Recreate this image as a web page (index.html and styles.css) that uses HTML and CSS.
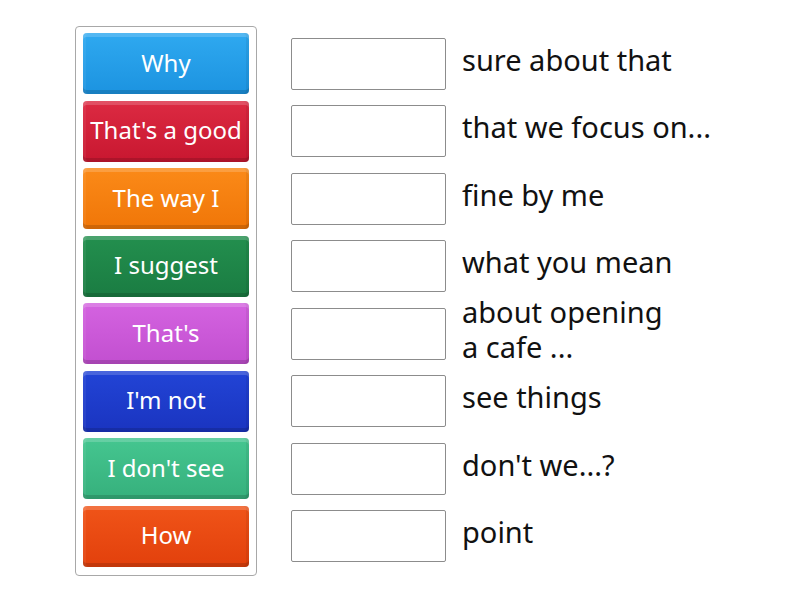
FILE: index.html
```html
<!DOCTYPE html>
<html>
<head>
<meta charset="utf-8">
<link rel="stylesheet" href="styles.css">
</head>
<body>
<div class="page">
  <div class="tiles">
    <div class="tile blue">Why</div>
    <div class="tile red">That's a good</div>
    <div class="tile orange">The way I</div>
    <div class="tile green">I suggest</div>
    <div class="tile purple">That's</div>
    <div class="tile navy">I'm not</div>
    <div class="tile mint">I don't see</div>
    <div class="tile tomato">How</div>
  </div>
  <div class="answers">
    <div class="row"><div class="slot"></div><div class="label">sure about that</div></div>
    <div class="row"><div class="slot"></div><div class="label">that we focus on...</div></div>
    <div class="row"><div class="slot"></div><div class="label">fine by me</div></div>
    <div class="row"><div class="slot"></div><div class="label">what you mean</div></div>
    <div class="row"><div class="slot"></div><div class="label">about opening<br>a cafe ...</div></div>
    <div class="row"><div class="slot"></div><div class="label">see things</div></div>
    <div class="row"><div class="slot"></div><div class="label">don't we...?</div></div>
    <div class="row"><div class="slot"></div><div class="label">point</div></div>
  </div>
</div>
</body>
</html>
```

FILE: styles.css
```css
html, body {
  margin: 0;
  padding: 0;
  background: #ffffff;
}
body {
  font-family: "Noto Sans", "Open Sans", sans-serif;
  width: 800px;
  height: 600px;
  overflow: hidden;
}
.page {
  display: flex;
  align-items: flex-start;
  padding: 26px 0 0 75px;
}
.tiles {
  width: 166px;
  height: 536px;
  padding: 6px 7px;
  border: 1px solid #a8a8a8;
  border-radius: 4px;
  display: flex;
  flex-direction: column;
  gap: 6.5px;
}
.tile {
  height: 61px;
  border-radius: 4px;
  color: #ffffff;
  font-size: 24px;
  display: flex;
  align-items: center;
  justify-content: center;
  white-space: nowrap;
  box-shadow: inset 0 4px 0 rgba(255,255,255,0.18), inset 0 -4px 0 rgba(0,0,0,0.14), inset 3px 0 0 rgba(255,255,255,0.06), inset -3px 0 0 rgba(0,0,0,0.06);
  padding-bottom: 3px;
  box-sizing: border-box;
}
.blue { background: linear-gradient(#2fa9f0, #1c93e0); }
.red { background: linear-gradient(#dc2a42, #c81730); }
.orange { background: linear-gradient(#fb8a18, #f07608); }
.green { background: linear-gradient(#238f4e, #1a7c42); }
.purple { background: linear-gradient(#d463e0, #c24fd0); }
.navy { background: linear-gradient(#2244d6, #1a34c0); }
.mint { background: linear-gradient(#45c690, #36b07c); }
.tomato { background: linear-gradient(#f05418, #e2400c); }
.answers {
  padding-top: 7px;
  margin-left: 34px;
  display: flex;
  flex-direction: column;
  gap: 6.5px;
}
.row {
  height: 61px;
  display: flex;
  align-items: center;
}
.slot {
  width: 153px;
  height: 50px;
  border: 1px solid #8c8c8c;
  border-radius: 2px;
  flex: none;
}
.label {
  margin-left: 16px;
  font-size: 29px;
  line-height: 35px;
  color: #111111;
  padding-bottom: 9px;
  white-space: nowrap;
}
```
